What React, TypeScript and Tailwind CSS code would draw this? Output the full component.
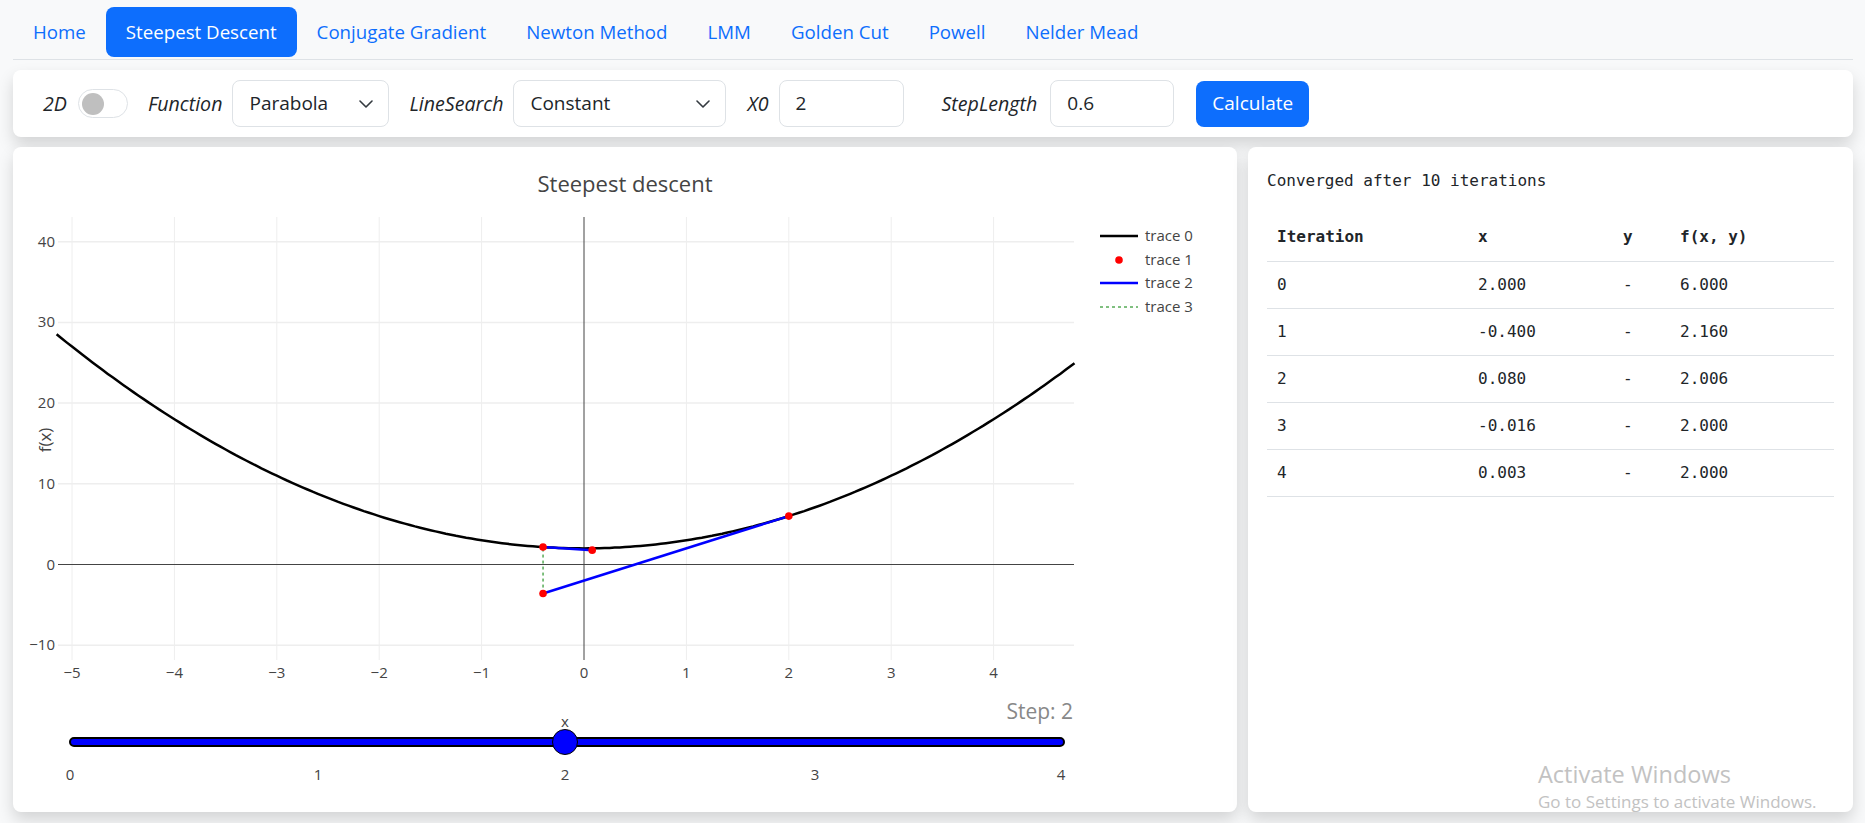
import React from 'react';

const tabs = ['Home', 'Steepest Descent', 'Conjugate Gradient', 'Newton Method', 'LMM', 'Golden Cut', 'Powell', 'Nelder Mead'];

const rows = [
  { it: 0, x: '2.000', y: '-', f: '6.000' },
  { it: 1, x: '-0.400', y: '-', f: '2.160' },
  { it: 2, x: '0.080', y: '-', f: '2.006' },
  { it: 3, x: '-0.016', y: '-', f: '2.000' },
  { it: 4, x: '0.003', y: '-', f: '2.000' },
];

// plot scale, coords relative to the left card
const X0 = 571;
const SX = 102.4;
const Y0 = 417.5;
const SY = 8.07;
const px = (x: number) => X0 + SX * x;
const py = (y: number) => Y0 - SY * y;
const f = (x: number) => x * x + 2;

const PL = 45;
const PR = 1061;
const PT = 70;
const PB = 513;

function Chevron() {
  return (
    <svg width="14" height="8" viewBox="0 0 14 8" fill="none">
      <path d="M1 1l6 6 6-6" stroke="#343a40" strokeWidth="1.6" strokeLinecap="round" strokeLinejoin="round" />
    </svg>
  );
}

function Plot() {
  const pts: string[] = [];
  for (let i = 0; i <= 198; i++) {
    const x = -5.15 + i * 0.05;
    pts.push(`${px(x).toFixed(1)},${py(f(x)).toFixed(1)}`);
  }
  pts.push(`${px(4.79).toFixed(1)},${py(f(4.79)).toFixed(1)}`);
  const xticks = [-5, -4, -3, -2, -1, 0, 1, 2, 3, 4];
  const yticks = [-10, 0, 10, 20, 30, 40];
  const red = [
    [2, 6],
    [-0.4, -3.6],
    [-0.4, 2.16],
    [0.08, 1.776],
  ];
  const stepX = [57, 305, 552, 802, 1048];
  const font = "'Open Sans', Verdana, Arial, sans-serif";

  return (
    <svg width="1224" height="665" viewBox="0 0 1224 665" style={{ fontFamily: font }}>
      <text x="612" y="45" textAnchor="middle" fontSize="22" fill="#444">Steepest descent</text>

      {/* grid */}
      {xticks.filter((t) => t !== 0).map((t) => (
        <line key={'gx' + t} x1={px(t)} x2={px(t)} y1={PT} y2={PB} stroke="#eee" strokeWidth="1" />
      ))}
      {yticks.filter((t) => t !== 0).map((t) => (
        <line key={'gy' + t} x1={PL} x2={PR} y1={py(t)} y2={py(t)} stroke="#eee" strokeWidth="1.5" />
      ))}
      <line x1={px(0)} x2={px(0)} y1={PT} y2={PB} stroke="#444" strokeWidth="1" />
      <line x1={PL} x2={PR} y1={py(0)} y2={py(0)} stroke="#444" strokeWidth="1" />

      {/* tick labels */}
      {xticks.map((t) => (
        <text key={'lx' + t} x={px(t)} y="531" textAnchor="middle" fontSize="15" fill="#444">
          {t < 0 ? '\u2212' + Math.abs(t) : t}
        </text>
      ))}
      {yticks.map((t) => (
        <text key={'ly' + t} x="42" y={py(t) + 5} textAnchor="end" fontSize="15" fill="#444">
          {t < 0 ? '\u2212' + Math.abs(t) : t}
        </text>
      ))}
      <text transform="translate(38,293) rotate(-90)" textAnchor="middle" fontSize="17" fill="#444">f(x)</text>

      {/* traces */}
      <polyline points={pts.join(' ')} fill="none" stroke="#000" strokeWidth="2.5" />
      <line x1={px(-0.4)} x2={px(-0.4)} y1={py(-3.6)} y2={py(2.16)} stroke="green" strokeWidth="1" strokeDasharray="3,3" />
      <line x1={px(2)} y1={py(6)} x2={px(-0.4)} y2={py(-3.6)} stroke="#0000ff" strokeWidth="2.5" />
      <line x1={px(-0.4)} y1={py(2.16)} x2={px(0.08)} y2={py(1.776)} stroke="#0000ff" strokeWidth="2.5" />
      {red.map(([x, y], i) => (
        <circle key={i} cx={px(x)} cy={py(y)} r="3.8" fill="#ff0000" />
      ))}

      {/* legend */}
      <line x1="1087" x2="1125" y1="89" y2="89" stroke="#000" strokeWidth="2.5" />
      <text x="1132" y="94" fontSize="15" fill="#444">trace 0</text>
      <circle cx="1106" cy="113" r="3.8" fill="#ff0000" />
      <text x="1132" y="118" fontSize="15" fill="#444">trace 1</text>
      <line x1="1087" x2="1125" y1="136" y2="136" stroke="#0000ff" strokeWidth="2.5" />
      <text x="1132" y="141" fontSize="15" fill="#444">trace 2</text>
      <line x1="1087" x2="1125" y1="160" y2="160" stroke="green" strokeWidth="1" strokeDasharray="3,3" />
      <text x="1132" y="165" fontSize="15" fill="#444">trace 3</text>

      {/* slider */}
      <text x="1060" y="572" textAnchor="end" fontSize="21" fill="#888">Step: 2</text>
      <rect x="57" y="591" width="994" height="8" rx="4" fill="#0000ff" stroke="#000" strokeWidth="2" />
      <text x="552" y="580" textAnchor="middle" fontSize="15" fill="#444">x</text>
      <circle cx="552" cy="595" r="12.5" fill="#0000ff" stroke="#000" strokeWidth="1" />
      {stepX.map((x, i) => (
        <text key={'s' + i} x={x} y="633" textAnchor="middle" fontSize="15" fill="#444">{i}</text>
      ))}
    </svg>
  );
}

export default function App() {
  const sans = "font-['Open_Sans',_'Noto_Sans',_sans-serif]";
  return (
    <div className={`relative min-h-screen bg-[#f8f9fa] px-[13px] pr-[12px] text-[#212529] ${sans}`}>
      {/* nav pills */}
      <ul className="flex border-b border-[#dee2e6] pt-[7px] pb-[2px] pl-0">
        {tabs.map((t) => (
          <li key={t}>
            <a
              className={`flex h-[50px] items-center rounded-lg px-5 text-[18.7px] ${
                t === 'Steepest Descent' ? 'bg-[#0d6efd] text-white' : 'text-[#0d6efd]'
              }`}
            >
              {t}
            </a>
          </li>
        ))}
      </ul>

      {/* toolbar */}
      <div className="mt-[10px] flex h-[67px] items-center rounded-lg bg-white pl-[30px] text-[19px] shadow-[0_8px_16px_rgba(0,0,0,0.15)]">
        <span className="text-[19.6px] italic">2D</span>
        <div className="ml-[11px] flex h-[29px] w-[50px] items-center rounded-full border border-[#dee2e6] bg-white pl-[3px]">
          <div className="h-[22px] w-[22px] rounded-full bg-[#bfbfbf]" />
        </div>
        <span className="ml-[20px] text-[19.6px] italic">Function</span>
        <div className="ml-[10px] flex h-[47px] w-[157px] items-center justify-between rounded-lg border border-[#dee2e6] pl-4 pr-[15px]">
          <span>Parabola</span>
          <Chevron />
        </div>
        <span className="ml-[20px] text-[19.6px] italic">LineSearch</span>
        <div className="ml-[10px] flex h-[47px] w-[213px] items-center justify-between rounded-lg border border-[#dee2e6] pl-4 pr-[15px]">
          <span>Constant</span>
          <Chevron />
        </div>
        <span className="ml-[21px] text-[19.6px] italic">X0</span>
        <div className="ml-[10px] flex h-[47px] w-[125px] items-center rounded-lg border border-[#dee2e6] pl-4">2</div>
        <span className="ml-[38px] text-[19.6px] italic">StepLength</span>
        <div className="ml-[13px] flex h-[47px] w-[124px] items-center rounded-lg border border-[#dee2e6] pl-4">0.6</div>
        <button className="ml-[22px] flex h-[46px] w-[113px] items-center justify-center rounded-lg bg-[#0d6efd] text-white">
          Calculate
        </button>
      </div>

      {/* main */}
      <div className="mt-[10px] flex h-[665px] gap-[11px]">
        <div className="w-[1224px] shrink-0 overflow-hidden rounded-lg bg-white shadow-[0_8px_16px_rgba(0,0,0,0.15)]">
          <Plot />
        </div>
        <div className="flex-1 rounded-lg bg-white px-[19px] pt-[22px] shadow-[0_8px_16px_rgba(0,0,0,0.15)] font-['DejaVu_Sans_Mono',_monospace] text-[16px] leading-6">
          <p className="mb-[21px]">Converged after 10 iterations</p>
          <table className="w-[567px] border-collapse">
            <thead>
              <tr className="h-[47px] border-b border-[#dee2e6] font-bold">
                <td className="w-[201px] px-[10px]">Iteration</td>
                <td className="w-[145px] px-[10px]">x</td>
                <td className="w-[57px] px-[10px]">y</td>
                <td className="w-[164px] px-[10px]">f(x, y)</td>
              </tr>
            </thead>
            <tbody>
              {rows.map((r) => (
                <tr key={r.it} className="h-[47px] border-b border-[#dee2e6]">
                  <td className="px-[10px]">{r.it}</td>
                  <td className="px-[10px]">{r.x}</td>
                  <td className="px-[10px]">{r.y}</td>
                  <td className="px-[10px]">{r.f}</td>
                </tr>
              ))}
            </tbody>
          </table>
        </div>
      </div>

      {/* windows watermark */}
      <div className="pointer-events-none absolute left-[1538px] top-[758px] text-[#c2c2c2] font-['Open_Sans',_sans-serif]">
        <div className="text-[23.5px] leading-[32px]">Activate Windows</div>
        <div className="text-[17px] leading-[24px]">Go to Settings to activate Windows.</div>
      </div>
    </div>
  );
}
